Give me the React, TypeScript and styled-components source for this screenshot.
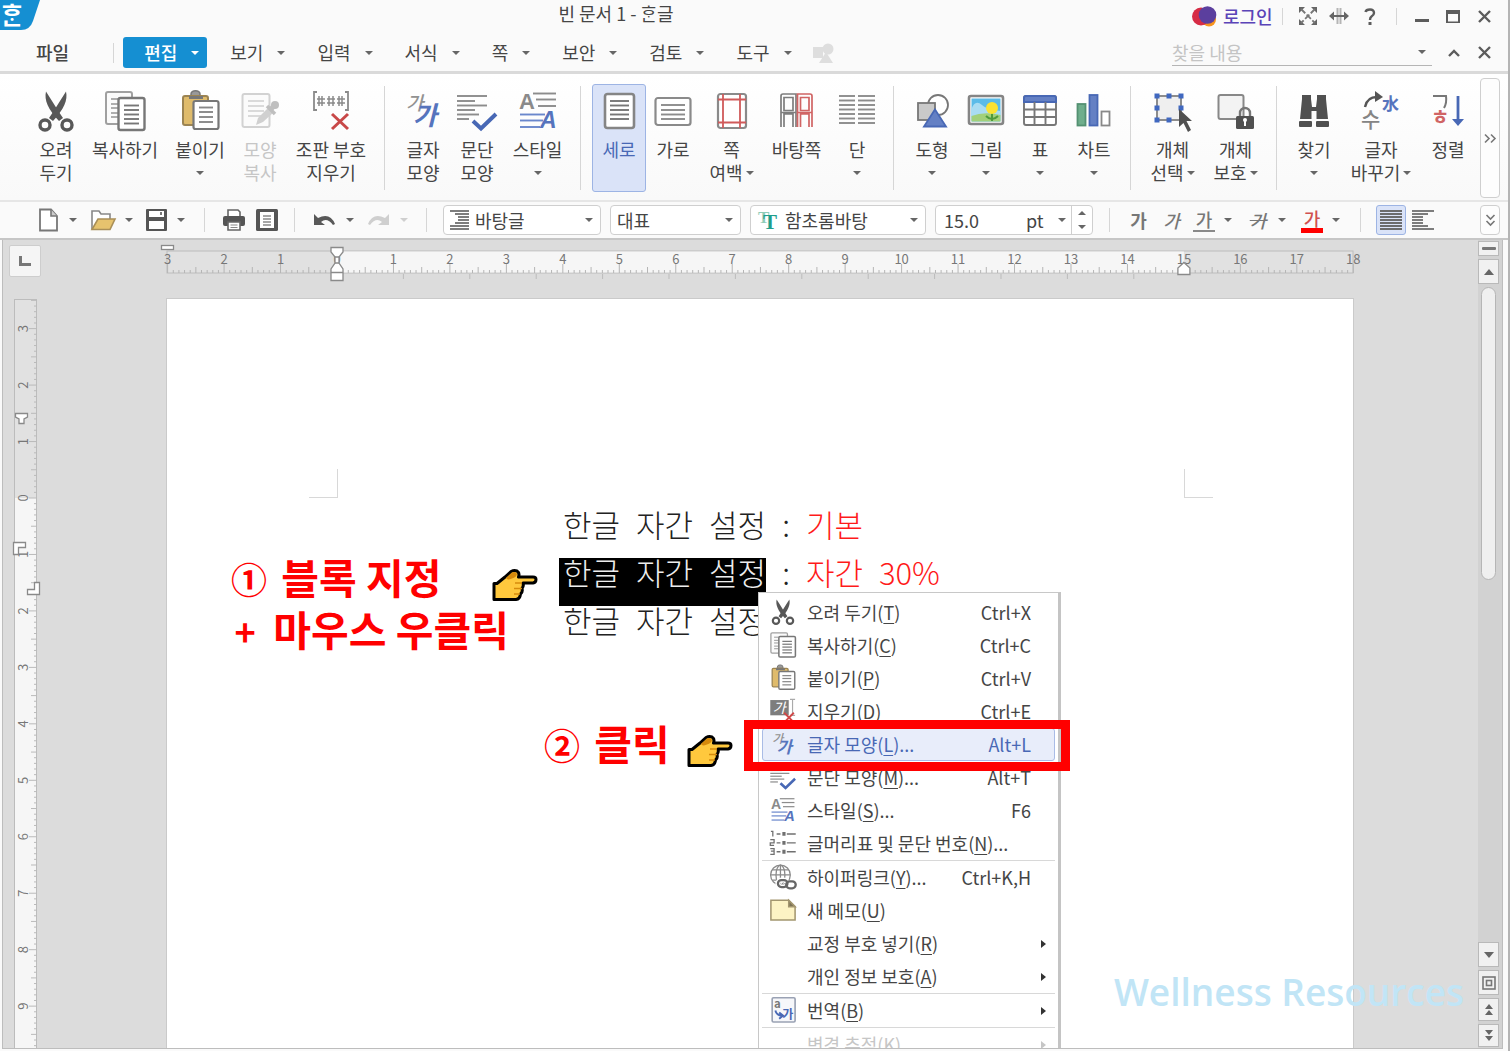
import React from "react";
import styled, { createGlobalStyle, css } from "styled-components";

const ink = "#454545";
const blue = "#4868b5";
const gray = "#8c8c8c";
const ui = `"Noto Sans CJK KR", "Noto Sans", sans-serif`;

const Global = createGlobalStyle`
  *, *::before, *::after { box-sizing: border-box; }
  body { margin: 0; background: #fafafa; }
  button, input, select { font: inherit; color: inherit; }
  button { background: none; border: 0; padding: 0; cursor: pointer; }
  svg { display: block; flex: none; overflow: visible; }
`;

const Window = styled.div`
  height: 100vh;
  display: flex;
  flex-direction: column;
  overflow: hidden;
  background: #fafafa;
  border-right: 2px solid #b4b4b4;
  font-family: ${ui};
  font-size: 18px;
  line-height: 23px;
  color: ${ink};
`;

/* ---------- title bar ---------- */
const TitleBar = styled.header`
  display: flex;
  align-items: flex-start;
  height: 32px;
`;
const Title = styled.h1`
  flex: 1;
  margin: 0;
  padding-top: 2px;
  font-size: 18px;
  font-weight: 400;
  text-align: center;
`;
const TitleTools = styled.div`
  display: flex;
  align-items: center;
  height: 32px;
  width: 316px;
`;
const Login = styled.button`
  display: flex;
  align-items: center;
  gap: 6px;
  margin-right: 9px;
  color: #5a44b8;
  font-weight: 500;
`;
const IconButton = styled.button`
  display: flex;
  align-items: center;
  justify-content: center;
  width: 31px;
  height: 32px;
`;
const Divider = styled.span<{ $h: number; $m?: string }>`
  flex: none;
  width: 1px;
  height: ${(p) => p.$h}px;
  margin: ${(p) => p.$m ?? "0"};
  background: #d6d6d6;
`;

/* ---------- menu bar ---------- */
const MenuBar = styled.nav`
  display: flex;
  align-items: center;
  height: 42px;
  padding: 2px 8px 0 20px;
  border-bottom: 3px solid #dadada;
`;
const MenuButton = styled.button<{ $active?: boolean; $bold?: boolean }>`
  display: flex;
  align-items: center;
  gap: 14px;
  height: 31px;
  padding: 0 16px;
  font-weight: ${(p) => (p.$bold ? 500 : 400)};
  ${(p) =>
    p.$active &&
    css`
      margin: 0 7px 0 9px;
      padding: 0 8px 0 21px;
      border-radius: 3px;
      background: #158fd2;
      color: #fff;
      font-weight: 500;
    `}
`;
const Search = styled.label`
  display: flex;
  align-items: center;
  width: 260px;
  height: 26px;
  margin: 0 6px 0 auto;
  padding-right: 6px;
  border-bottom: 1px solid #b5b5b5;
`;
const SearchInput = styled.input`
  flex: 1;
  min-width: 0;
  padding: 0;
  border: 0;
  outline: 0;
  background: none;
  &::placeholder { color: #c4c4c4; opacity: 1; }
`;

/* ---------- ribbon ---------- */
const Ribbon = styled.section`
  display: flex;
  align-items: center;
  height: 128px;
  padding: 2px 8px 0 29px;
  border-bottom: 2px solid #e6e6e6;
  background: linear-gradient(#fff, #f9f9f9);
`;
const RibbonItem = styled.button<{ $w: number; $active?: boolean; $off?: boolean }>`
  display: flex;
  flex-direction: column;
  align-items: center;
  flex: none;
  width: ${(p) => p.$w}px;
  height: 108px;
  padding-top: 6px;
  border: 1px solid ${(p) => (p.$active ? "#9db4e4" : "transparent")};
  border-radius: 3px;
  background: ${(p) => (p.$active ? "#dae3f8" : "none")};
  color: ${(p) => (p.$active ? blue : p.$off ? "#c6c6c6" : ink)};
  white-space: nowrap;
  svg + span { margin-top: 5px; }
`;
const LabelRow = styled.span`
  display: flex;
  align-items: center;
  justify-content: center;
  gap: 3px;
  height: 23px;
`;
const MoreButton = styled.button<{ $h: number }>`
  display: flex;
  align-items: center;
  justify-content: center;
  width: 20px;
  height: ${(p) => p.$h}px;
  margin-left: auto;
  border: 1px solid #cfcfcf;
  border-radius: 4px;
  background: #fdfdfd;
`;

/* ---------- toolbar ---------- */
const Toolbar = styled.section`
  display: flex;
  align-items: center;
  height: 38px;
  padding: 0 8px 0 36px;
  border-bottom: 2px solid #c6c6c6;
`;
const Tool = styled.button<{ $active?: boolean; $gap?: number }>`
  display: flex;
  align-items: center;
  justify-content: center;
  flex: none;
  width: ${(p) => (p.$active ? 30 : 25)}px;
  height: 30px;
  margin-right: ${(p) => p.$gap ?? 0}px;
  border: 1px solid ${(p) => (p.$active ? "#9db4e4" : "transparent")};
  border-radius: 3px;
  background: ${(p) => (p.$active ? "#dae3f8" : "none")};
`;
const DropTool = styled(Tool)`
  width: 54px;
  justify-content: flex-start;
  gap: 9px;
`;
const Combo = styled.label<{ $w: number }>`
  display: flex;
  align-items: center;
  gap: 6px;
  flex: none;
  width: ${(p) => p.$w}px;
  height: 30px;
  margin-right: 9px;
  padding: 0 7px 0 6px;
  border: 1px solid #cfcfcf;
  border-radius: 4px;
  background: #fff;
`;
const ComboSelect = styled.select`
  flex: 1;
  min-width: 0;
  padding: 0;
  border: 0;
  outline: 0;
  background: none;
  appearance: none;
`;
const SizeBox = styled.div`
  display: flex;
  align-items: center;
  flex: none;
  width: 158px;
  height: 30px;
  padding-left: 8px;
  border: 1px solid #cfcfcf;
  border-radius: 4px;
  background: #fff;
`;
const SizeInput = styled.input`
  width: 82px;
  padding: 0;
  border: 0;
  outline: 0;
  background: none;
`;
const UnitSelect = styled(ComboSelect)`
  flex: none;
  width: 32px;
`;
const Spinner = styled.div`
  display: flex;
  flex-direction: column;
  width: 21px;
  height: 28px;
  margin-left: auto;
  border-left: 1px solid #cfcfcf;
  button { flex: 1; display: flex; align-items: center; justify-content: center; }
`;
const Glyph = styled.span<{ $kind: "bold" | "italic" | "under" | "strike" | "color" }>`
  width: 22px;
  line-height: 22px;
  text-align: center;
  font-weight: 500;
  color: #777;
  ${(p) => p.$kind === "bold" && "font-weight: 700;"}
  ${(p) => p.$kind === "italic" && "font-style: italic;"}
  ${(p) => p.$kind === "under" && "border-bottom: 2px solid #8a8a8a;"}
  ${(p) => p.$kind === "strike" && "text-decoration: line-through; font-style: italic;"}
  ${(p) => p.$kind === "color" && "border-bottom: 5px solid #f00; color: #d05050; line-height: 20px;"}
`;

/* ---------- work area ---------- */
const Work = styled.main`
  position: relative;
  flex: 1;
  min-height: 0;
  display: grid;
  grid-template-columns: 39px 1fr 24px;
  margin: 0 5px 2px 2px;
  border: 1px solid #bdbdbd;
  border-top: 0;
  background: #dcdcdc;
  overflow: hidden;
`;
const Side = styled.div`
  display: flex;
  flex-direction: column;
  min-height: 0;
  overflow: hidden;
  padding-top: 5px;
`;
const Corner = styled.button`
  display: flex;
  align-items: center;
  justify-content: center;
  flex: none;
  width: 32px;
  height: 32px;
  margin: 0 0 22px 6px;
  border: 1px solid #cdcdcd;
  border-radius: 2px;
  background: #f5f5f5;
`;
const Canvas = styled.div`
  display: flex;
  flex-direction: column;
  align-items: center;
  min-height: 0;
  padding-top: 3px;
  gap: 16px;
`;
const Page = styled.article`
  position: relative;
  flex: 1 0 0;
  min-height: 0;
  width: 1186px;
  background: #fff;
  box-shadow: 0 0 0 1px #cacaca;
`;
const Marks = styled.div`
  display: flex;
  justify-content: space-between;
  padding: 170px 140px 12px 142px;
`;
const Mark = styled.span<{ $side: "left" | "right" }>`
  width: 29px;
  height: 29px;
  border-bottom: 1px solid #d8d8d8;
  ${(p) => (p.$side === "left" ? "border-right" : "border-left")}: 1px solid #d8d8d8;
`;
const Line = styled.p`
  display: flex;
  gap: 16px;
  height: 48px;
  margin: 0 0 0 392px;
  font-size: 31px;
  font-weight: 300;
  line-height: 28px;
  color: #222;
`;
const Run = styled.span<{ $selected?: boolean }>`
  display: flex;
  gap: 16px;
  height: 48px;
  padding-left: 4px;
  ${(p) => p.$selected && "background: #000; color: #eee;"}
`;
const Red = styled.span`
  color: #ff1a1a;
`;

/* ---------- context menu ---------- */
const Popup = styled.div`
  position: absolute;
  left: 591px;
  top: 293px;
  width: 303px;
  padding: 3px 3px;
  border: 1px solid #c8c8c8;
  border-right: 3px solid #c4c4c4;
  background: #fff;
`;
const PopupItem = styled.button<{ $active?: boolean; $off?: boolean }>`
  display: flex;
  align-items: center;
  width: 100%;
  height: 33px;
  padding: 0 8px 0 6px;
  border: 1px solid ${(p) => (p.$active ? "#a9bce6" : "transparent")};
  border-radius: 3px;
  background: ${(p) => (p.$active ? "#e8edfa" : "none")};
  color: ${(p) => (p.$active ? blue : p.$off ? "#c6c6c6" : ink)};
  text-align: left;
  white-space: nowrap;
`;
const PopupIcon = styled.span`
  width: 38px;
`;
const PopupLabel = styled.span`
  flex: 1;
  u { text-underline-offset: 3px; text-decoration-thickness: 1px; }
`;
const Shortcut = styled.span`
  margin-right: 15px;
`;
const PopupRule = styled.hr`
  height: 1px;
  margin: 0;
  border: 0;
  background: #d8d8d8;
`;

/* ---------- tutorial notes ---------- */
const Note = styled.div<{ $x: number; $y: number }>`
  position: absolute;
  left: ${(p) => p.$x}px;
  top: ${(p) => p.$y}px;
  font-size: 41px;
  font-weight: 700;
  line-height: 52px;
  color: #f00;
  white-space: nowrap;
`;
const Lead = styled.span`
  display: inline-block;
  min-width: 28px;
  margin-right: 5px;
  font-size: 36px;
  font-weight: 700;
  line-height: 40px;
  text-align: center;
`;
const Hand = styled.div<{ $x: number; $y: number }>`
  position: absolute;
  left: ${(p) => p.$x}px;
  top: ${(p) => p.$y}px;
`;
const Frame = styled.div`
  position: absolute;
  left: 577px;
  top: 421px;
  width: 326px;
  height: 51px;
  border: 9px solid #f00;
`;
const Watermark = styled.div`
  position: absolute;
  right: 38px;
  bottom: 32px;
  font-family: "Open Sans", sans-serif;
  font-size: 37px;
  font-weight: 600;
  line-height: 48px;
  color: #c1e5f6;
`;

/* ---------- scroll bar ---------- */
const Scroll = styled.div`
  display: flex;
  flex-direction: column;
  gap: 3px;
  min-height: 0;
  padding: 1px 3px 1px 0;
  background: #d2d2d2;
`;
const ScrollButton = styled.button<{ $h: number }>`
  display: flex;
  align-items: center;
  justify-content: center;
  flex: none;
  width: 21px;
  height: ${(p) => p.$h}px;
  border: 1px solid #b9b9b9;
  background: #f1f1f1;
`;
const Track = styled.div`
  flex: 1;
  padding: 0 3px;
`;
const Thumb = styled.div`
  width: 15px;
  height: 45%;
  border: 1px solid #b5b5b5;
  border-radius: 8px;
  background: #efefef;
`;

/* ---------- small drawings ---------- */
const Caret = ({ c = "#666", up }: { c?: string; up?: boolean }) => (
  <svg width="8" height="4" viewBox="0 0 8 4"><path d={up ? "M0 4L4 0L8 4Z" : "M0 0H8L4 4Z"} fill={c} /></svg>
);
const lines = (x1: number, x2: number, ys: number[], c = gray, w = 1.9) =>
  ys.map((y) => <path key={y} d={`M${x1} ${y}H${x2}`} stroke={c} strokeWidth={w} />);

const art: Record<string, React.ReactNode> = {
  cut: (
    <g fill="#585858">
      <path d="M12 .5C10 9 14 18 25 30L29 27C22 17 17 8 12 .5Z" />
      <path d="M32 .5C34 9 30 18 19 30L15 27C22 17 27 8 32 .5Z" />
      <circle cx="11" cy="34" r="5" fill="none" stroke="#585858" strokeWidth="3.4" />
      <circle cx="33" cy="34" r="5" fill="none" stroke="#585858" strokeWidth="3.4" />
    </g>
  ),
  copy: (
    <g>
      <rect x="3" y="1" width="26" height="32" rx="2" fill="#fbfbfb" stroke="#a0a0a0" strokeWidth="2" />
      {lines(8, 15, [8, 13, 17, 22, 26], "#aaa")}
      <rect x="15.5" y="7" width="26" height="32" rx="2" fill="#fff" stroke="#777" strokeWidth="2.4" />
      {lines(21, 36, [14.5, 19, 23.5, 28, 32.5], "#777")}
    </g>
  ),
  paste: (
    <g>
      <path d="M13 5V3A4 3 0 0 1 22 3V5Z" fill="#999" stroke="#777" strokeWidth="1.5" />
      <rect x="5" y="5" width="25" height="29" rx="2" fill="#dfbb6b" stroke="#9c8452" strokeWidth="2" />
      <path d="M11 5H25V8H11Z" fill="#777" />
      <rect x="15.5" y="10" width="25" height="28" rx="2" fill="#fff" stroke="#777" strokeWidth="2.2" />
      {lines(21, 35, [16.5, 21, 26, 31], "#888")}
    </g>
  ),
  brush: (
    <g>
      <rect x="4.5" y="3" width="27" height="33" rx="2" fill="#fbfbfb" stroke="#d2d2d2" strokeWidth="2" />
      {lines(10, 26, [10, 15, 20, 25], "#d9d9d9")}
      <path d="M18 34L20 27L31 16L36 21L25 31Z" fill="#d0d0d0" />
      <path d="M29 15L37 23" stroke="#bfbfbf" strokeWidth="3.5" />
      <circle cx="37" cy="14" r="4" fill="#bfbfbf" /><path d="M32 19L37 14" stroke="#bfbfbf" strokeWidth="5" />
    </g>
  ),
  marks: (
    <g fill="none" stroke="#8a8a8a" strokeWidth="1.8">
      <path d="M8 1H5V19H8M36 1H39V19H36" />
      <path d="M10 5V15M13 5V15M8 8H16M8 12H16M20 5V15M24 5V15M18 8H26M18 12H26M30 5V15M33 5V15M28 8H36M28 12H36" strokeWidth="1.5" />
      <path d="M23 23L39 38M39 23L23 38" stroke="#c84848" strokeWidth="3" />
    </g>
  ),
  char: (
    <g fontFamily={ui}>
      <text x="5" y="19" fontSize="19" fontStyle="italic" fontWeight="500" fill="#929292">가</text>
      <text x="12" y="34" fontSize="26" fontStyle="italic" fontWeight="700" fill="#5674bd">가</text>
    </g>
  ),
  para: (
    <g>
      {lines(2, 32, [5, 14.5])}{lines(2, 20, [10, 19])}{lines(2, 24, [23.5])}{lines(2, 14, [28])}
      <path d="M18 30L26 37.5L41 23" fill="none" stroke={blue} strokeWidth="4" />
    </g>
  ),
  style: (
    <g fontFamily={`"Liberation Sans", sans-serif`} fontWeight="700">
      <text x="3" y="18" fontSize="22" fill="#8a8a8a">A</text>
      {lines(17, 40, [2.5])}{lines(20, 40, [8.5])}{lines(22, 40, [15])}
      {lines(4, 29, [23.5], "#6a87cc")}{lines(4, 27, [29.5], "#6a87cc")}{lines(4, 24, [36], "#6a87cc")}
      <text x="24" y="37" fontSize="23" fontStyle="italic" fill="#5674bd">A</text>
    </g>
  ),
  portrait: (
    <g>
      <rect x="8" y="3" width="29" height="34" rx="2.5" fill="#fff" stroke="#858585" strokeWidth="2.6" />
      {lines(13, 32, [10, 14.5, 19, 23.5, 28], "#777")}
    </g>
  ),
  landscape: (
    <g>
      <rect x="4.5" y="7" width="35" height="27" rx="2.5" fill="#fff" stroke="#8a8a8a" strokeWidth="2.2" />
      {lines(10, 34, [14, 19, 23.5, 28])}
    </g>
  ),
  margin: (
    <g fill="none">
      <rect x="8" y="3" width="28" height="34" rx="2.5" fill="#fff" stroke="#8a8a8a" strokeWidth="2.2" />
      <path d="M13 3V37M30 3V37M8 8.5H36M8 31.5H36" stroke="#d05a5a" strokeWidth="1.8" />
    </g>
  ),
  master: (
    <g fill="none" strokeWidth="1.7">
      <path d="M6 36V5Q6 3 8 3H21V36M9 36V23H18V36M9 6.500H18V19.500H9ZM6 21.500H21" stroke="#7d7d7d" />
      <path d="M37 36V5Q37 3 35 3H22.500V36M34 36V23H25.500V36M25.500 6.500H34V19.500H25.500ZM22.500 21.500H37" stroke="#d06464" />
    </g>
  ),
  columns: <g>{lines(4, 20, [5, 9.5, 14, 18.5, 23, 27.5, 32])}{lines(23, 40, [5, 9.5, 14, 18.5, 23, 27.5, 32])}</g>,
  shapes: (
    <g stroke="#777" strokeWidth="1.8">
      <circle cx="28" cy="14" r="10" fill="#fff" />
      <rect x="8" y="12" width="17" height="17" fill="#c9c9c9" />
      <path d="M25 18.5L36 35.5H14Z" fill="#6480c4" stroke={blue} />
    </g>
  ),
  picture: (
    <g>
      <rect x="5" y="5" width="34" height="28" rx="2" fill="#fff" stroke="#858585" strokeWidth="2.6" />
      <rect x="7.5" y="7.5" width="29" height="23" fill="#5bbbe8" />
      <path d="M7.5 18Q11 8 18 14Q22 18 36.5 20V26H7.5Z" fill="#a9dcf2" />
      <path d="M7.5 25Q20 20 36.5 24V30.5H7.5Z" fill="#a2d07a" />
      <path d="M28 20V30M22 25Q28 31 34 25" fill="none" stroke="#4f9a3c" strokeWidth="2" />
      <circle cx="28" cy="17" r="6" fill="#fbe232" />
    </g>
  ),
  table: (
    <g fill="none" stroke="#777" strokeWidth="1.9">
      <rect x="6" y="5" width="32" height="29" rx="2" fill="#fff" />
      <path d="M6 11V7Q6 5 8 5H36Q38 5 38 7V11Z" fill="#6480c4" stroke={blue} />
      <path d="M16.5 11V34M27.5 11V34M6 18.5H38M6 26H38" />
    </g>
  ),
  chart: (
    <g strokeWidth="1.8">
      <rect x="5.5" y="13" width="8" height="21.5" fill="#6fae8c" stroke="#549172" />
      <rect x="17.5" y="4" width="8" height="30.5" fill="#6480c4" stroke={blue} />
      <rect x="29.5" y="20.5" width="8" height="14" fill="#fff" stroke="#888" />
    </g>
  ),
  select: (
    <g>
      <rect x="6" y="5" width="24" height="24" fill="#efefef" stroke="#888" strokeWidth="1.9" />
      {[[6, 5], [18, 5], [30, 5], [6, 17], [30, 17], [6, 29], [18, 29]].map(([x, y]) => (
        <rect key={`${x}-${y}`} x={x - 2.5} y={y - 2.5} width="5" height="5" fill="#4068c0" />
      ))}
      <path d="M28 18L41 30H35.5L40 39L37 41L32.5 32L28 36Z" fill="#505050" />
    </g>
  ),
  protect: (
    <g>
      <rect x="4.5" y="4" width="25" height="24" rx="2" fill="#f3f3f3" stroke="#888" strokeWidth="2" />
      <path d="M26 26V22A5 5 0 0 1 36 22V26" fill="none" stroke="#777" strokeWidth="2.4" />
      <rect x="22" y="25" width="18" height="13" rx="1.5" fill="#505050" />
      <circle cx="31" cy="29" r="2" fill="#fff" /><path d="M31 29V35" stroke="#fff" strokeWidth="2" />
    </g>
  ),
  find: (
    <g fill="#505050">
      <path d="M10 4H19V8L20 16H24L25 8V4H34V8L36 28H24.5V20H19.5V28H8L10 8Z" />
      <rect x="7" y="30" width="13" height="6" rx="1" /><rect x="24" y="30" width="13" height="6" rx="1" />
    </g>
  ),
  replace: (
    <g fontFamily={ui}>
      <path d="M6 16Q8 6 18 6" fill="none" stroke="#555" strokeWidth="2.4" /><path d="M16 0L24 6L16 11Z" fill="#555" />
      <text x="23" y="19" fontSize="17" fontWeight="700" fill="#5674bd">水</text>
      <text x="2" y="36" fontSize="21" fontWeight="500" fill="#858585">수</text>
    </g>
  ),
  sort: (
    <g fontFamily={ui}>
      <path d="M7 5H20Q21 12 18 17" fill="none" stroke="#777" strokeWidth="2" />
      <text x="5" y="34" fontSize="20" fontWeight="700" fill="#d06464">ㅎ</text>
      <path d="M32 5V30" stroke={blue} strokeWidth="2.8" /><path d="M26 28H38L32 35Z" fill={blue} />
    </g>
  ),
  erase: (
    <g fontFamily={ui}>
      <rect x="2" y="3" width="29" height="24" fill="#7d7d7d" />
      <text x="6" y="23" fontSize="22" fontStyle="italic" fill="#fff">가</text>
      <path d="M33 2H41M37 2V26M33 27H41" stroke="#aaa" strokeWidth="1.8" />
      <path d="M24 23L39 38M39 23L24 38" stroke="#d04848" strokeWidth="3" />
    </g>
  ),
  bullets: (
    <g stroke="#707070" fill="none" strokeWidth="2.2">
      <path d="M3 2H6V10M2 15H8V20H2V24H8M2 29H8V38H2M3 33H8" strokeWidth="2" />
      <path d="M12 6H18M28 6H42M12 20H18M28 20H42M12 34H18M28 34H42" />
      <path d="M21 6H26M21 20H26M21 34H26" strokeWidth="6" />
    </g>
  ),
  link: (
    <g stroke="#8a8a8a" fill="none" strokeWidth="2">
      <circle cx="18" cy="17" r="15.5" />
      <ellipse cx="18" cy="17" rx="7" ry="15.5" /><path d="M18 1V32M3 17H33M5 9H31M5 25H20" />
      <rect x="14" y="25" width="15" height="11" rx="5.5" stroke="#fff" strokeWidth="8" />
      <rect x="14" y="25" width="15" height="11" rx="5.5" stroke="#666" strokeWidth="3.6" />
      <rect x="27" y="27" width="15" height="11" rx="5.5" stroke="#666" strokeWidth="3.6" />
    </g>
  ),
  memo: (
    <g strokeWidth="2.4" stroke="#a3966f">
      <path d="M3 5H31L41 15V36H3Z" fill="#fdf3c4" /><path d="M31 5V15H41Z" fill="#7d7355" />
    </g>
  ),
  translate: (
    <g fontFamily={ui}>
      <rect x="5" y="1" width="36" height="38" rx="2" fill="#f6f7fa" stroke="#9aa2b4" strokeWidth="2.6" />
      <text x="8" y="17" fontSize="18" fontWeight="700" fill="#777">a</text>
      <path d="M10 21Q12 29 20 29M16 24L22 29L16 34" fill="none" stroke={blue} strokeWidth="3" />
      <text x="21" y="35" fontSize="19" fontWeight="700" fill={blue}>가</text>
    </g>
  ),
};
const Art = ({ name, small }: { name: string; small?: boolean }) => (
  <svg width={small ? 28 : 44} height={small ? 27 : 42} viewBox="0 0 44 42">{art[name]}</svg>
);

const HandPointer = () => (
  <svg width="46" height="33" viewBox="0 0 46 33">
    <path d="M2 14.5H5L13 8L19 2.5Q22 1 25 2Q28 4 26.5 8H41Q44 8 44 10.5Q44 13.5 41 14H31Q32 17 30 19.5Q31 23 28.5 25Q28 30 24 30.5H2Z" fill="#ffc83d" stroke="#000" strokeWidth="3" strokeLinejoin="round" />
    <path d="M14 9L20 3.5Q24 2 25 5Q24.5 8 20 9.5Q16 11 15 10Z" fill="#d68a0c" />
    <path d="M23 14H30M22 19.5H30M22 25H28" stroke="#d68a0c" strokeWidth="1.3" />
  </svg>
);

/* ---------- rulers ---------- */
const CM = 56.46;
const HRuler = () => {
  const x0 = 8, w = 1186, zero = x0 + 170;
  const ticks = [];
  for (let i = -30; i <= 180; i++) {
    const h = i % 10 === 0 ? 9 : i % 5 === 0 ? 6 : 3;
    ticks.push(<path key={i} d={`M${zero + (i * CM) / 10} ${30 - h}V30`} stroke="#b5b5b5" />);
  }
  return (
    <svg width="1202" height="40" viewBox="0 0 1202 40">
      <rect x={x0} y="8" width={w} height="22" fill="#e1e1e1" stroke="#bcbcbc" />
      <rect x={zero} y="8.5" width={15 * CM} height="21" fill="#f6f6f6" />
      {ticks}
      <g fontFamily={ui} fontSize="13" fill="#777" textAnchor="middle">
        {Array.from({ length: 22 }, (_, k) => k - 3).map((n) => (
          <text key={n} x={zero + n * CM} y="21">{Math.abs(n)}</text>
        ))}
      </g>
      <path d={Array.from({ length: 12 }, (_, k) => `M${zero + (k + 1) * 66.4} 31v5`).join("")} stroke="#bbb" />
      <g fill="#fff" stroke="#8a8a8a" strokeWidth="1.3">
        <rect x="2.5" y="2.5" width="12" height="4" />
        <path d={`M${zero - 6} 4.5H${zero + 6}V9L${zero + 2} 14V20L${zero + 6} 26V37.5H${zero - 6}V26L${zero - 2} 20V14L${zero - 6} 9Z`} />
        <path d={`M${zero - 6} 29.5H${zero + 6}M${zero - 2} 14H${zero + 2}M${zero - 2} 20H${zero + 2}`} />
        <path d={`M${zero + 15 * CM} 19.5L${zero + 15 * CM + 6} 25V31.5H${zero + 15 * CM - 6}V25Z`} />
      </g>
    </svg>
  );
};
const VRuler = () => {
  const zero = 199, h = 2400;
  const ticks = [];
  for (let i = -35; i <= 380; i++) {
    const w = i % 10 === 0 ? 8 : i % 5 === 0 ? 6 : 3;
    ticks.push(<path key={i} d={`M${34 - w} ${zero + (i * CM) / 10}H34`} stroke="#bababa" />);
  }
  return (
    <svg width="39" height={h} viewBox={`0 0 39 ${h}`}>
      <rect x="11.5" y=".5" width="22" height={h} fill="#e1e1e1" stroke="#bcbcbc" />
      <rect x="12" y={zero} width="21" height={h} fill="#f6f6f6" />
      {ticks}
      <g fontFamily={ui} fontSize="13" fill="#777" textAnchor="middle">
        {Array.from({ length: 28 }, (_, k) => k - 3).map((n) => (
          <text key={n} transform={`translate(25 ${zero + n * CM}) rotate(-90)`}>{Math.abs(n)}</text>
        ))}
      </g>
      <g fill="#fff" stroke="#8a8a8a" strokeWidth="1.3">
        <path d="M12.5 114.5H24.5V118L21 120V124.5H16V120L12.5 118Z" />
        <path d="M10.5 243.5H22.5V248.5H15.5V255.5H10.5Z" />
        <path d="M31.5 283.5H36.5V295.5H24.5V290.5H31.5Z" />
      </g>
    </svg>
  );
};

/* ---------- data ---------- */
type Item = { icon: string; w: number; rows: string[]; drop?: boolean; active?: boolean; off?: boolean };
const ribbon: Item[][] = [
  [
    { icon: "cut", w: 54, rows: ["오려", "두기"] },
    { icon: "copy", w: 84, rows: ["복사하기"] },
    { icon: "paste", w: 66, rows: ["붙이기", ""], drop: true },
    { icon: "brush", w: 54, rows: ["모양", "복사"], off: true },
    { icon: "marks", w: 88, rows: ["조판 부호", "지우기"] },
  ],
  [
    { icon: "char", w: 54, rows: ["글자", "모양"] },
    { icon: "para", w: 54, rows: ["문단", "모양"] },
    { icon: "style", w: 67, rows: ["스타일", ""], drop: true },
  ],
  [
    { icon: "portrait", w: 54, rows: ["세로"], active: true },
    { icon: "landscape", w: 54, rows: ["가로"] },
    { icon: "margin", w: 63, rows: ["쪽", "여백"], drop: true },
    { icon: "master", w: 67, rows: ["바탕쪽"] },
    { icon: "columns", w: 54, rows: ["단", ""], drop: true },
  ],
  [
    { icon: "shapes", w: 54, rows: ["도형", ""], drop: true },
    { icon: "picture", w: 54, rows: ["그림", ""], drop: true },
    { icon: "table", w: 54, rows: ["표", ""], drop: true },
    { icon: "chart", w: 54, rows: ["차트", ""], drop: true },
  ],
  [
    { icon: "select", w: 63, rows: ["개체", "선택"], drop: true },
    { icon: "protect", w: 63, rows: ["개체", "보호"], drop: true },
  ],
  [
    { icon: "find", w: 54, rows: ["찾기", ""], drop: true },
    { icon: "replace", w: 80, rows: ["글자", "바꾸기"], drop: true },
    { icon: "sort", w: 54, rows: ["정렬"] },
  ],
];

type Entry = { icon?: string; text: string; key: string; tail?: string; cut?: string; sub?: boolean; active?: boolean; off?: boolean };
const popup: Entry[][] = [
  [
    { icon: "cut", text: "오려 두기", key: "T", cut: "Ctrl+X" },
    { icon: "copy", text: "복사하기", key: "C", cut: "Ctrl+C" },
    { icon: "paste", text: "붙이기", key: "P", cut: "Ctrl+V" },
    { icon: "erase", text: "지우기", key: "D", cut: "Ctrl+E" },
    { icon: "char", text: "글자 모양", key: "L", tail: "...", cut: "Alt+L", active: true },
    { icon: "para", text: "문단 모양", key: "M", tail: "...", cut: "Alt+T" },
    { icon: "style", text: "스타일", key: "S", tail: "...", cut: "F6" },
    { icon: "bullets", text: "글머리표 및 문단 번호", key: "N", tail: "..." },
  ],
  [
    { icon: "link", text: "하이퍼링크", key: "Y", tail: "...", cut: "Ctrl+K,H" },
    { icon: "memo", text: "새 메모", key: "U" },
    { text: "교정 부호 넣기", key: "R", sub: true },
    { text: "개인 정보 보호", key: "A", sub: true },
  ],
  [{ icon: "translate", text: "번역", key: "B", sub: true }],
  [{ text: "변경 추적", key: "K", sub: true, off: true }],
];

const Close = () => (
  <svg width="13" height="13" viewBox="0 0 13 13"><path d="M1 1L12 12M12 1L1 12" stroke="#5c5c5c" strokeWidth="2.4" /></svg>
);

export default function App() {
  return (
    <Window>
      <Global />
      <TitleBar>
        <svg width="40" height="30" viewBox="0 0 40 30" role="img" aria-label="한글">
          <path d="M0 0H40L33 21Q30 30 21 30H0Z" fill="#158fd2" />
          <text x="1" y="24" fontFamily={ui} fontSize="24" fontWeight="700" fill="#fff">ᄒᆞᆫ</text>
        </svg>
        <Title>빈 문서 1 - ᄒᆞᆫ글</Title>
        <TitleTools>
          <Login>
            <svg width="25" height="21" viewBox="0 0 25 21">
              <circle cx="17" cy="13.5" r="7" fill="#f7941d" /><circle cx="9" cy="10.5" r="9" fill="#d62b45" />
              <circle cx="15.5" cy="9" r="8.8" fill="#5b3f9e" />
            </svg>
            로그인
          </Login>
          <Divider $h={17} $m="0 10px 0 0" />
          <IconButton aria-label="전체 화면">
            <svg width="18" height="18" viewBox="0 0 18 18" fill="#666">
              <path d="M0 0H6L0 6ZM18 0V6L12 0ZM0 18V12L6 18ZM18 18H12L18 12Z" />
              <path d="M2 2L16 16M16 2L2 16" stroke="#777" strokeWidth="1.8" strokeDasharray="6 2" />
            </svg>
          </IconButton>
          <IconButton aria-label="쪽 맞춤">
            <svg width="20" height="18" viewBox="0 0 20 18" fill="#666">
              <path d="M7.5 1H9.5V17H7.5ZM10.5 1H12.5V17H10.5Z" fill="#b5b5b5" />
              <path d="M0 9L5 4.5V8H15V4.5L20 9L15 13.5V10H5V13.5Z" />
            </svg>
          </IconButton>
          <IconButton aria-label="도움말">
            <svg width="12" height="17" viewBox="0 0 12 17"><path d="M1.5 4Q2 1.5 6 1.5Q10 1.5 10 5Q10 7 7.5 8.5Q6 9.5 6 12" fill="none" stroke="#5c5c5c" strokeWidth="2.4" /><rect x="4.5" y="14" width="3" height="3" fill="#5c5c5c" /></svg>
          </IconButton>
          <Divider $h={17} $m="0 10px" />
          <IconButton aria-label="최소화"><svg width="14" height="13" viewBox="0 0 14 13"><path d="M0 10.5H14" stroke="#5c5c5c" strokeWidth="3" /></svg></IconButton>
          <IconButton aria-label="최대화"><svg width="14" height="13" viewBox="0 0 14 13"><path d="M0 0H14V13H0ZM2 4V11.5H12V4Z" fill="#5c5c5c" fillRule="evenodd" /></svg></IconButton>
          <IconButton aria-label="닫기"><Close /></IconButton>
        </TitleTools>
      </TitleBar>

      <MenuBar>
        <MenuButton $bold>파일</MenuButton>
        <Divider $h={20} $m="0 0 0 28px" />
        <MenuButton $active>편집<Caret c="#fff" /></MenuButton>
        {["보기", "입력", "서식", "쪽", "보안", "검토", "도구"].map((m) => (
          <MenuButton key={m}>{m}<Caret /></MenuButton>
        ))}
        <IconButton aria-label="도형 도구" disabled>
          <svg width="21" height="20" viewBox="0 0 21 20" fill="#dedede"><rect y="4" width="10" height="11" /><circle cx="15" cy="6" r="5.5" /><path d="M13 9L20 20H6Z" /></svg>
        </IconButton>
        <Search>
          <SearchInput placeholder="찾을 내용" aria-label="찾을 내용" />
          <Caret />
        </Search>
        <IconButton aria-label="메뉴 접기">
          <svg width="12" height="8" viewBox="0 0 12 8"><path d="M1 7L6 2L11 7" fill="none" stroke="#5c5c5c" strokeWidth="2.4" /></svg>
        </IconButton>
        <IconButton aria-label="문서 닫기"><Close /></IconButton>
      </MenuBar>

      <Ribbon>
        {ribbon.map((group, g) => (
          <React.Fragment key={g}>
            {g > 0 && <Divider $h={104} $m={g > 3 ? "0 10px 0 9px" : "0 11px 0 9px"} />}
            {group.map((it) => (
              <RibbonItem key={it.icon} $w={it.w} $active={it.active} $off={it.off} disabled={it.off}>
                <Art name={it.icon} />
                {it.rows.map((r, i) => (
                  <LabelRow key={i}>{r}{it.drop && i === 1 && <Caret />}</LabelRow>
                ))}
              </RibbonItem>
            ))}
          </React.Fragment>
        ))}
        <MoreButton $h={120} aria-label="더 보기">
          <svg width="12" height="9" viewBox="0 0 12 9"><path d="M1 .5L5 4.5L1 8.5M7 .5L11 4.5L7 8.5" fill="none" stroke="#777" strokeWidth="1.6" /></svg>
        </MoreButton>
      </Ribbon>

      <Toolbar>
        <DropTool aria-label="새 문서">
          <svg width="23" height="24" viewBox="0 0 23 24"><path d="M3 1.5H14L20 8V22.5H3Z" fill="#fff" stroke="#777" strokeWidth="1.8" /><path d="M14 1.5V8H20" fill="#ccc" stroke="#777" strokeWidth="1.6" /></svg>
          <Caret />
        </DropTool>
        <DropTool aria-label="열기">
          <svg width="25" height="22" viewBox="0 0 25 22"><path d="M1 20V2H8L10 5H19V10" fill="#fff" stroke="#888" strokeWidth="1.6" /><path d="M1 20.5L7 10H24L19 20.5Z" fill="#e6c36e" stroke="#a98f58" strokeWidth="1.6" /></svg>
          <Caret />
        </DropTool>
        <DropTool aria-label="저장">
          <svg width="23" height="22" viewBox="0 0 23 22"><rect x="1" width="21" height="22" rx="1" fill="#555" /><rect x="4" y="2" width="15" height="6" fill="#fff" /><rect x="15" y="3" width="2" height="3" fill="#777" /><rect x="4" y="12" width="15" height="8" fill="#fff" /></svg>
          <Caret />
        </DropTool>
        <Divider $h={24} $m="0 16px 0 6px" />
        <Tool $gap={8} aria-label="인쇄">
          <svg width="22" height="22" viewBox="0 0 22 22"><path d="M5 7V1H15L17 3V7" fill="#fff" stroke="#666" strokeWidth="1.6" /><rect y="7" width="22" height="10" rx="2" fill="#555" /><path d="M5 13H17V21H5Z" fill="#fff" stroke="#666" strokeWidth="1.6" /><path d="M7.5 16H14.5M7.5 18.5H14.5" stroke="#888" /></svg>
        </Tool>
        <Tool aria-label="미리 보기">
          <svg width="22" height="22" viewBox="0 0 22 22"><rect width="22" height="22" rx="1.5" fill="#555" /><rect x="4" y="3" width="14" height="16" fill="#fff" />{lines(7, 15, [7, 10, 13, 16], "#777", 1.3)}</svg>
        </Tool>
        <Divider $h={24} $m="0 16px 0 15px" />
        <DropTool aria-label="되돌리기">
          <svg width="25" height="18" viewBox="0 0 25 18"><path d="M2 3V14L13 14L9 11Q15 6 21 14L23 13Q18 1 6 7Z" fill="#585858" /></svg>
          <Caret />
        </DropTool>
        <DropTool aria-label="다시 실행" disabled>
          <svg width="25" height="18" viewBox="0 0 25 18"><path d="M23 3V14L12 14L16 11Q10 6 4 14L2 13Q7 1 19 7Z" fill="#cfcfcf" /></svg>
          <Caret c="#cfcfcf" />
        </DropTool>
        <Divider $h={24} $m="0 16px 0 7px" />
        <Combo $w={158}>
          <svg width="19" height="20" viewBox="0 0 19 20">{lines(0, 19, [1, 16, 19], "#777")}{lines(5, 19, [4, 13], "#777")}{lines(8, 19, [7, 10], "#777")}</svg>
          <ComboSelect aria-label="스타일"><option>바탕글</option></ComboSelect>
          <Caret />
        </Combo>
        <Combo $w={131}>
          <ComboSelect aria-label="언어"><option>대표</option></ComboSelect>
          <Caret />
        </Combo>
        <Combo $w={176}>
          <svg width="22" height="20" viewBox="0 0 22 20" fontFamily={`"Liberation Serif", serif`} fontWeight="700"><text x="1" y="13" fontSize="17" fill="#8fcdb8">T</text><text x="6" y="19" fontSize="21" fill="#1f9e8c">T</text></svg>
          <ComboSelect aria-label="글꼴"><option>함초롬바탕</option></ComboSelect>
          <Caret />
        </Combo>
        <SizeBox>
          <SizeInput aria-label="글자 크기" defaultValue="15.0" />
          <UnitSelect aria-label="단위"><option>pt</option></UnitSelect>
          <Caret />
          <Spinner>
            <button aria-label="크게"><Caret up /></button>
            <button aria-label="작게"><Caret /></button>
          </Spinner>
        </SizeBox>
        <Divider $h={24} $m="0 16px" />
        <Tool $gap={8} aria-label="진하게"><Glyph $kind="bold">가</Glyph></Tool>
        <Tool $gap={8} aria-label="기울임"><Glyph $kind="italic">가</Glyph></Tool>
        <DropTool aria-label="밑줄"><Glyph $kind="under">가</Glyph><Caret /></DropTool>
        <DropTool aria-label="취소선"><Glyph $kind="strike">가</Glyph><Caret /></DropTool>
        <DropTool aria-label="글자 색"><Glyph $kind="color">가</Glyph><Caret /></DropTool>
        <Divider $h={24} $m="0 15px 0 6px" />
        <Tool $active $gap={4} aria-label="양쪽 정렬">
          <svg width="22" height="21" viewBox="0 0 22 21">{lines(0, 22, [1, 4, 7, 10, 13, 16, 19], "#666")}</svg>
        </Tool>
        <Tool aria-label="왼쪽 정렬">
          <svg width="22" height="21" viewBox="0 0 22 21">{lines(0, 22, [1, 19], "#777")}{lines(0, 16, [4, 16], "#777")}{lines(0, 11, [7, 10, 13], "#777")}</svg>
        </Tool>
        <MoreButton $h={30} aria-label="도구 더 보기">
          <svg width="9" height="12" viewBox="0 0 9 12"><path d="M.5 1L4.5 5L8.5 1M.5 7L4.5 11L8.5 7" fill="none" stroke="#777" strokeWidth="1.6" /></svg>
        </MoreButton>
      </Toolbar>

      <Work>
        <Side>
          <Corner aria-label="탭 종류"><svg width="12" height="10" viewBox="0 0 12 10"><path d="M1.5 0V8.5H12" fill="none" stroke="#777" strokeWidth="3" /></svg></Corner>
          <VRuler />
        </Side>
        <Canvas>
          <HRuler />
          <Page>
            <Marks><Mark $side="left" /><Mark $side="right" /></Marks>
            <Line>
              <Run><span>한글</span><span>자간</span><span>설정</span></Run>
              <span>:</span><Red>기본</Red>
            </Line>
            <Line>
              <Run $selected><span>한글</span><span>자간</span><span>설정</span></Run>
              <span>:</span><Red>자간</Red><Red>30%</Red>
            </Line>
            <Line>
              <Run><span>한글</span><span>자간</span><span>설정</span></Run>
            </Line>
            <Note $x={64} $y={251}><Lead>①</Lead> 블록 지정<br /><Lead>+</Lead> 마우스 우클릭</Note>
            <Hand $x={325} $y={270}><HandPointer /></Hand>
            <Note $x={377} $y={417}><Lead>②</Lead> 클릭</Note>
            <Hand $x={520} $y={436}><HandPointer /></Hand>
            <Popup role="menu">
              {popup.map((group, g) => (
                <React.Fragment key={g}>
                  {g > 0 && <PopupRule />}
                  {group.map((e) => (
                    <PopupItem key={e.key} role="menuitem" $active={e.active} $off={e.off} disabled={e.off}>
                      <PopupIcon>{e.icon && <Art name={e.icon} small />}</PopupIcon>
                      <PopupLabel>{e.text}(<u>{e.key}</u>){e.tail}</PopupLabel>
                      {e.cut && <Shortcut>{e.cut}</Shortcut>}
                      {e.sub && <svg width="5" height="8" viewBox="0 0 5 8"><path d="M0 0L5 4L0 8Z" fill={e.off ? "#c6c6c6" : "#333"} /></svg>}
                    </PopupItem>
                  ))}
                </React.Fragment>
              ))}
            </Popup>
            <Frame />
          </Page>
        </Canvas>
        <Scroll>
          <ScrollButton $h={15} aria-label="창 나누기"><svg width="14" height="3" viewBox="0 0 14 3"><rect width="14" height="3" rx="1" fill="#777" /></svg></ScrollButton>
          <ScrollButton $h={25} aria-label="위로"><svg width="10" height="6" viewBox="0 0 10 6"><path d="M0 6L5 0L10 6Z" fill="#666" /></svg></ScrollButton>
          <Track><Thumb /></Track>
          <ScrollButton $h={25} aria-label="아래로"><svg width="10" height="6" viewBox="0 0 10 6"><path d="M0 0H10L5 6Z" fill="#666" /></svg></ScrollButton>
          <ScrollButton $h={25} aria-label="개체 선택"><svg width="14" height="14" viewBox="0 0 14 14" fill="none" stroke="#777" strokeWidth="1.6"><rect x="1" y="1" width="12" height="12" /><rect x="4.5" y="4.5" width="5" height="5" /></svg></ScrollButton>
          <ScrollButton $h={23} aria-label="이전 쪽"><svg width="8" height="11" viewBox="0 0 8 11"><path d="M0 5L4 0L8 5ZM0 11L4 6L8 11Z" fill="#666" /></svg></ScrollButton>
          <ScrollButton $h={23} aria-label="다음 쪽"><svg width="8" height="11" viewBox="0 0 8 11"><path d="M0 0H8L4 5ZM0 6H8L4 11Z" fill="#666" /></svg></ScrollButton>
        </Scroll>
        <Watermark>Wellness Resources</Watermark>
      </Work>
    </Window>
  );
}
